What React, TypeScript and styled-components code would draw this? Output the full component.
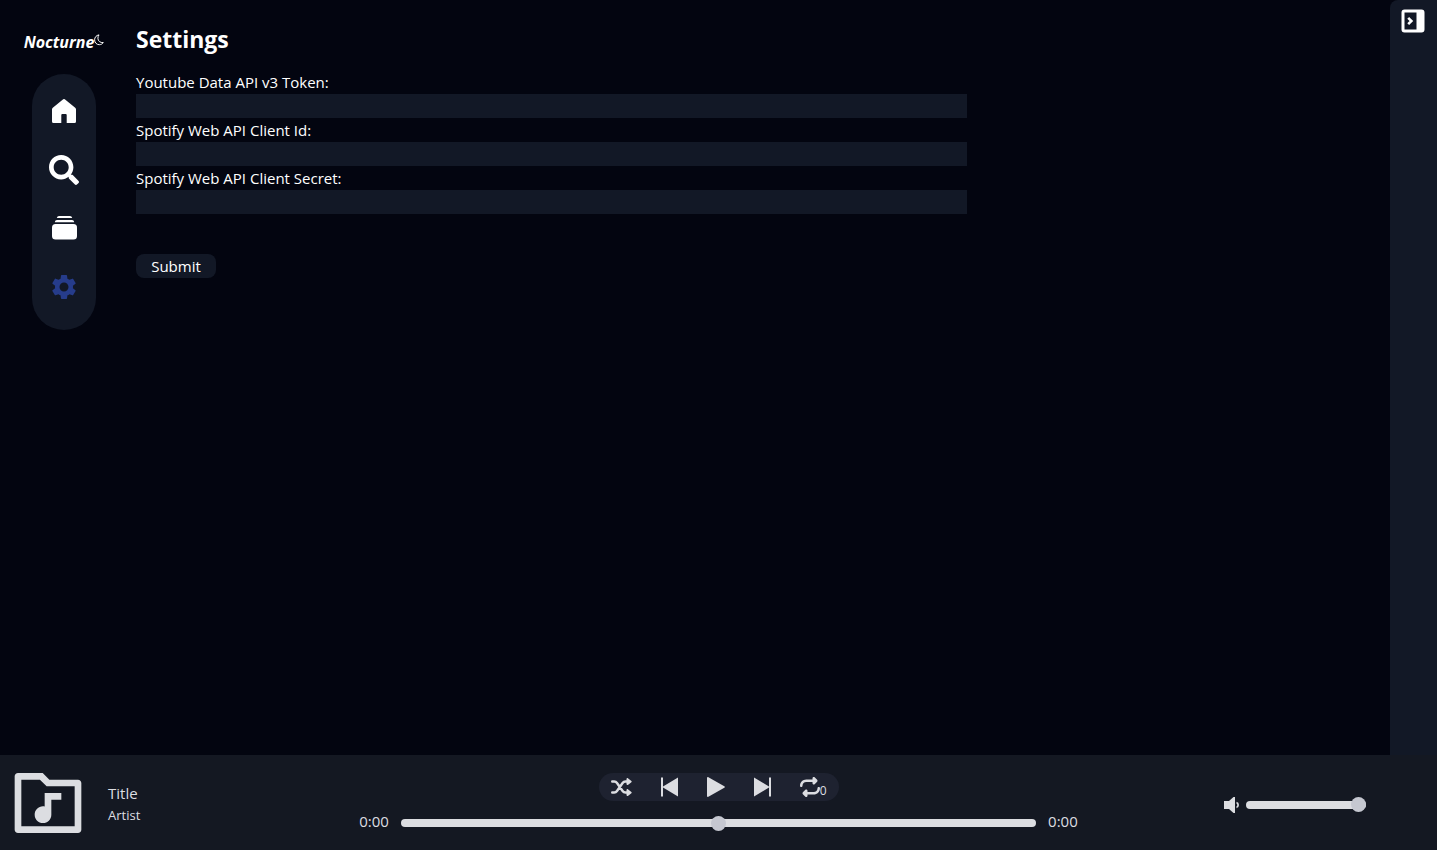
import React, { useState } from "react";
import styled, { createGlobalStyle } from "styled-components";
import { FaSearch } from "react-icons/fa";
import { FaRepeat } from "react-icons/fa6";
import { MdSettings } from "react-icons/md";
import { RiFolderMusicLine } from "react-icons/ri";

const GlobalStyle = createGlobalStyle`
  *, *::before, *::after { box-sizing: border-box; }
  body {
    margin: 0;
    background: #030510;
    color: #fff;
    font-family: "Open Sans", "Noto Sans", sans-serif;
    font-size: 15px;
    line-height: 24px;
  }
  button, input { font: inherit; color: inherit; }
  h1, p { margin: 0; }
`;

const Page = styled.div`
  display: flex;
  flex-direction: column;
  min-height: 100vh;
`;

const Upper = styled.div`
  display: flex;
  flex: 1;
`;

const Side = styled.aside`
  display: flex;
  flex-direction: column;
  align-items: center;
  width: 128px;
  padding-top: 30px;
`;

const Brand = styled.a`
  display: flex;
  align-items: flex-start;
  height: 24px;
  color: inherit;
  text-decoration: none;
  font-size: 16px;
  font-weight: 700;
  font-style: italic;
  svg { margin-top: 4px; }
`;

const Nav = styled.nav`
  display: flex;
  flex-direction: column;
  justify-content: space-between;
  align-items: center;
  width: 64px;
  height: 256px;
  margin-top: 20px;
  padding: 22px 0 28px;
  border-radius: 32px;
  background: #121826;
`;

const IconButton = styled.button<{ $active?: boolean }>`
  display: flex;
  align-items: center;
  justify-content: center;
  padding: 0;
  border: 0;
  background: none;
  color: ${(p) => (p.$active ? "#263c8b" : "inherit")};
  cursor: pointer;
`;

const NavButton = styled(IconButton)`
  width: 30px;
  height: 30px;
`;

const Content = styled.main`
  flex: 1;
  padding: 23px 8px;
`;

const Heading = styled.h1`
  margin-bottom: 15px;
  font-size: 23px;
  line-height: 32px;
  font-weight: 700;
`;

const Form = styled.form`
  display: flex;
  flex-direction: column;
  align-items: flex-start;
`;

const TextInput = styled.input`
  width: calc(100% * 2 / 3);
  height: 24px;
  padding: 0;
  border: 0;
  background: #121826;
`;

const Submit = styled.button`
  width: 80px;
  height: 24px;
  margin-top: 40px;
  padding: 0;
  border: 0;
  border-radius: 8px;
  background: #121826;
  line-height: 24px;
`;

const Queue = styled.aside`
  display: flex;
  justify-content: center;
  align-items: flex-start;
  width: 47px;
  padding: 9px 1px 0 0;
  border-radius: 8px 0 0 0;
  background: #121826;
`;

const Player = styled.footer`
  display: grid;
  grid-template-columns: 1fr 2fr 1fr;
  height: 95px;
  background: #141822;
  color: #dcdde1;
`;

const Track = styled.section`
  display: flex;
  align-items: center;
  gap: 20px;
  padding-left: 8px;
`;

const TrackTitle = styled.p`
  font-size: 15px;
  line-height: 24px;
`;

const TrackArtist = styled.p`
  font-size: 13px;
  line-height: 20px;
`;

const Transport = styled.section`
  display: flex;
  flex-direction: column;
  align-items: center;
  padding-top: 18px;
`;

const Controls = styled.div`
  display: flex;
  align-items: center;
  justify-content: space-between;
  width: 240px;
  height: 28px;
  padding: 0 12px;
  border-radius: 14px;
  background: #1e2230;
`;

const RepeatCount = styled.span`
  align-self: flex-end;
  font-size: 12px;
  line-height: 12px;
`;

const SeekRow = styled.div`
  display: flex;
  align-items: center;
  gap: 12px;
  width: 100%;
  margin-top: 8px;
`;

const Range = styled.input`
  flex: 1;
  min-width: 0;
  height: 8px;
  margin: 4px 0 0;
  appearance: none;
  border-radius: 4px;
  background: #dcdde1;
  &::-webkit-slider-thumb {
    appearance: none;
    width: 15px;
    height: 15px;
    border-radius: 50%;
    background: #c5c7d0;
  }
`;

const Volume = styled.section`
  display: flex;
  align-items: center;
  justify-content: flex-end;
  gap: 6px;
  padding: 4px 71px 0 0;
`;

const VolumeRange = styled(Range)`
  flex: none;
  width: 120px;
  margin: 0;
`;

const MoonIcon = () => (
  <svg width="10" height="12" viewBox="0 0 10 12" fill="none" stroke="currentColor" strokeLinejoin="round" aria-hidden="true">
    <path d="M5 .9C2.300 1.300.6 3.300.6 5.800c0 2.800 2 4.900 4.700 4.900 1.700 0 3.100-.8 4-2.100-2.900.3-5.400-1.500-5.400-4.300C3.900 3 4.200 1.900 5 .9z" />
  </svg>
);

const HomeIcon = () => (
  <svg width="24" height="24" viewBox="0 0 24 24" fill="currentColor" aria-hidden="true">
    <path d="M10.900.500a1.600 1.600 0 0 1 2.200 0L23.200 8.700c.5.4.8 1 .8 1.600V22.500a1.500 1.500 0 0 1-1.500 1.500h-7.800v-8a1 1 0 0 0-1-1h-3.400a1 1 0 0 0-1 1v8H1.500A1.500 1.500 0 0 1 0 22.500V10.300c0-.6.300-1.200.8-1.600z" />
  </svg>
);

const LibraryIcon = () => (
  <svg width="25" height="24" viewBox="0 0 25 24" fill="currentColor" aria-hidden="true">
    <path d="M7 0h11c1 0 1.900.8 2.200 2H4.800C5.100.8 6 0 7 0z" />
    <path d="M5 4h15c1.200 0 1.900.9 2.200 2.200H2.800C3.100 4.900 3.800 4 5 4z" />
    <rect y="8" width="25" height="15.500" rx="3.500" />
  </svg>
);

const PanelIcon = () => (
  <svg width="24" height="24" viewBox="0 0 24 24" aria-hidden="true">
    <path fill="#fff" fillRule="evenodd" d="M3.500.5h17a3 3 0 0 1 3 3v17a3 3 0 0 1-3 3h-17a3 3 0 0 1-3-3v-17a3 3 0 0 1 3-3zM3.500 3.500v17H15.500v-17z" />
    <path fill="none" stroke="#fff" strokeWidth="2.600" d="m7.200 8.800 3.200 3.200-3.200 3.200" />
  </svg>
);

const ShuffleIcon = () => (
  <svg width="21" height="18" viewBox="0 0 21 18" fill="none" stroke="currentColor" strokeWidth="2.400" strokeLinecap="round" aria-hidden="true">
    <path d="M1.200 3.500h2c1.200 0 2.100.5 2.800 1.500l5.600 8c.7 1 1.600 1.500 2.800 1.500H16M1.200 14.500h2c1.200 0 2.100-.5 2.800-1.500l5.600-8c.7-1 1.600-1.500 2.800-1.500H16" />
    <path fill="currentColor" stroke="none" d="M15.500 1c0-1 1-1.300 1.700-.6l3.200 2.500c.4.400.4.900 0 1.300l-3.200 2.500c-.7.700-1.700.3-1.700-.6zM15.500 12c0-1 1-1.300 1.700-.6l3.200 2.500c.4.400.4.900 0 1.300l-3.200 2.500c-.7.700-1.700.3-1.700-.6z" />
  </svg>
);

const SkipIcon = ({ forward }: { forward?: boolean }) => (
  <svg width="17" height="20" viewBox="0 0 17 20" fill="currentColor" aria-hidden="true">
    {forward ? <path d="M0 .5 15 9.500V.5h2v19h-2v-9L0 19.500z" /> : <path d="M17 .5 2 9.500V.5H0v19h2v-9L17 19.500z" />}
  </svg>
);

const PlayIcon = () => (
  <svg width="18" height="20" viewBox="0 0 18 20" fill="currentColor" aria-hidden="true">
    <path d="M0 1c0-.8.700-1.200 1.400-.8l15.900 9c.7.400.7 1.200 0 1.600l-15.900 9c-.7.400-1.400 0-1.400-.8z" />
  </svg>
);

const SpeakerIcon = () => (
  <svg width="16" height="16" viewBox="0 0 16 16" fill="currentColor" aria-hidden="true">
    <path d="M0 4h5l4.500-4H11v16H9.500L5 12H0z" />
    <path d="M12.500 4.800a3.300 3.300 0 0 1 0 6.400V9.200a1.300 1.300 0 0 0 0-2.400z" />
  </svg>
);

const fields = [
  { id: "youtube-token", label: "Youtube Data API v3 Token:" },
  { id: "spotify-id", label: "Spotify Web API Client Id:" },
  { id: "spotify-secret", label: "Spotify Web API Client Secret:" },
];

export default function App() {
  const [position, setPosition] = useState(50);
  const [volume, setVolume] = useState(100);

  return (
    <>
      <GlobalStyle />
      <Page>
        <Upper>
          <Side>
            <Brand href="#">
              Nocturne
              <MoonIcon />
            </Brand>
            <Nav aria-label="Main">
              <NavButton aria-label="Home"><HomeIcon /></NavButton>
              <NavButton aria-label="Search"><FaSearch size={30} /></NavButton>
              <NavButton aria-label="Library"><LibraryIcon /></NavButton>
              <NavButton aria-label="Settings" $active><MdSettings size={30} /></NavButton>
            </Nav>
          </Side>
          <Content>
            <Heading>Settings</Heading>
            <Form onSubmit={(e) => e.preventDefault()}>
              {fields.map((f) => (
                <React.Fragment key={f.id}>
                  <label htmlFor={f.id}>{f.label}</label>
                  <TextInput id={f.id} type="text" />
                </React.Fragment>
              ))}
              <Submit type="submit">Submit</Submit>
            </Form>
          </Content>
          <Queue>
            <IconButton aria-label="Collapse queue"><PanelIcon /></IconButton>
          </Queue>
        </Upper>
        <Player>
          <Track>
            <RiFolderMusicLine size={80} />
            <div>
              <TrackTitle>Title</TrackTitle>
              <TrackArtist>Artist</TrackArtist>
            </div>
          </Track>
          <Transport>
            <Controls>
              <IconButton aria-label="Shuffle"><ShuffleIcon /></IconButton>
              <IconButton aria-label="Previous"><SkipIcon /></IconButton>
              <IconButton aria-label="Play"><PlayIcon /></IconButton>
              <IconButton aria-label="Next"><SkipIcon forward /></IconButton>
              <IconButton aria-label="Repeat">
                <FaRepeat size={20} />
                <RepeatCount>0</RepeatCount>
              </IconButton>
            </Controls>
            <SeekRow>
              <span>0:00</span>
              <Range type="range" aria-label="Seek" value={position} onChange={(e) => setPosition(Number(e.target.value))} />
              <span>0:00</span>
            </SeekRow>
          </Transport>
          <Volume>
            <SpeakerIcon />
            <VolumeRange type="range" aria-label="Volume" value={volume} onChange={(e) => setVolume(Number(e.target.value))} />
          </Volume>
        </Player>
      </Page>
    </>
  );
}
